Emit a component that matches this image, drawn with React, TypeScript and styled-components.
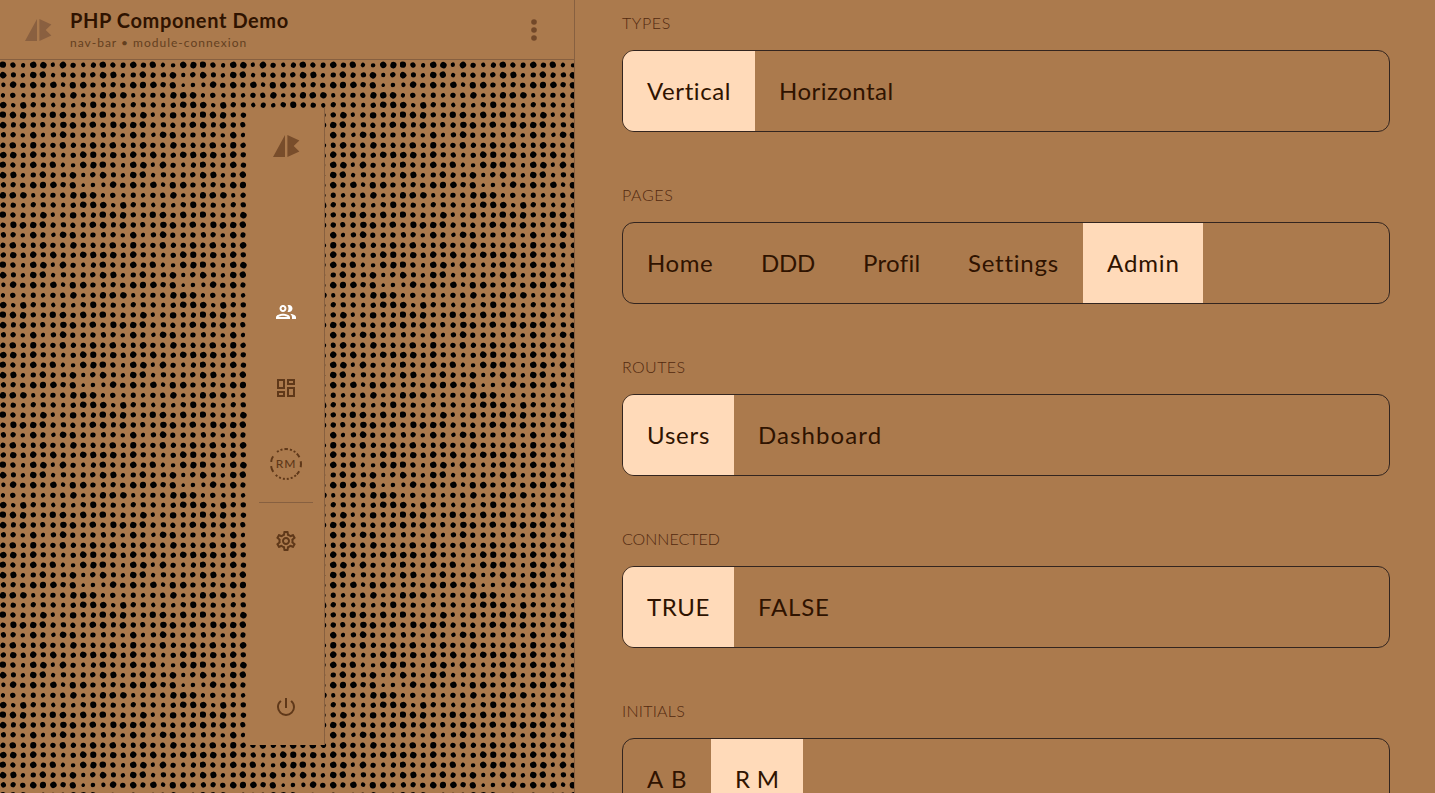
import React from 'react';
import styled, { createGlobalStyle } from 'styled-components';
import {
  MdOutlinePeople,
  MdOutlineDashboard,
  MdOutlineSettings,
  MdPowerSettingsNew,
} from 'react-icons/md';

const Global = createGlobalStyle`
  * { box-sizing: border-box; }
  body {
    margin: 0;
    overflow: hidden;
    background: #ab7a4d;
    color: #2f1300;
    font-family: Lato, "Open Sans", sans-serif;
  }
`;

const Page = styled.div`
  display: flex;
  height: 793px;
  overflow: hidden;
`;

const Preview = styled.section`
  display: flex;
  flex-direction: column;
  width: 575px;
  flex: none;
  border-right: 1px solid #876040;
`;

const Header = styled.header`
  display: flex;
  align-items: center;
  height: 60px;
  flex: none;
  padding: 0 28px 0 24px;
  border-bottom: 1px solid #876040;
`;

const Titles = styled.div`
  flex: 1;
  margin-left: 18px;
`;

const Title = styled.h1`
  margin: 0;
  font-size: 20px;
  line-height: 24px;
  font-weight: 700;
  letter-spacing: 0.6px;
  white-space: nowrap;
`;

const Subtitle = styled.p`
  margin: 3px 0 0;
  font-size: 12px;
  line-height: 16px;
  letter-spacing: 1px;
  color: #64401f;
  white-space: nowrap;
`;

const MenuButton = styled.button`
  display: grid;
  place-items: center;
  width: 24px;
  height: 24px;
  padding: 0;
  border: 0;
  background: none;
  color: #724829;
`;

const Stage = styled.div`
  display: grid;
  grid-template-columns: 247px 78px;
  flex: 1;
  padding: 48px 0;
  position: relative;
`;

const Backdrop = styled.svg`
  position: absolute;
  inset: 0;
  width: 100%;
  height: 100%;
`;

const NavBar = styled.nav`
  grid-column: 2;
  position: relative;
  display: flex;
  flex-direction: column;
  justify-content: space-between;
  background: #ab7a4d;
  box-shadow: inset -1px 0 #876040;
`;

const NavGroup = styled.div``;

const NavItem = styled.div<{ $active?: boolean }>`
  display: grid;
  place-items: center;
  height: 76px;
  color: ${(p) => (p.$active ? '#fff' : '#5f3819')};
  font-size: 24px;
`;

const Avatar = styled.span`
  display: grid;
  place-items: center;
  width: 32px;
  height: 32px;
  padding-bottom: 1px;
  border: 2px dotted #5f3819;
  border-left-style: dashed;
  border-right-style: dashed;
  border-radius: 50%;
  font-size: 12px;
  line-height: 14px;
  font-weight: 500;
  letter-spacing: 0.8px;
`;

const Divider = styled.hr`
  height: 1px;
  margin: 0 12px;
  border: 0;
  background: #876040;
`;

const Controls = styled.main`
  flex: 1;
  display: flex;
  flex-direction: column;
  gap: 52px;
  padding: 12px 45px 0 47px;
`;

const Legend = styled.h2<{ $spacing: number }>`
  margin: 0 0 14px;
  height: 24px;
  font-size: 16px;
  line-height: 21px;
  font-weight: 300;
  letter-spacing: ${(p) => p.$spacing}px;
  color: #52290f;
`;

const Options = styled.div`
  display: flex;
  height: 82px;
  border: 1px solid #33251f;
  border-radius: 12px;
  overflow: hidden;
`;

const Option = styled.button<{ $width: number; $spacing: number; $selected: boolean }>`
  width: ${(p) => p.$width}px;
  padding: 0 0 0 24px;
  border: 0;
  background: ${(p) => (p.$selected ? '#ffdab9' : 'transparent')};
  color: inherit;
  font: 24px/30px Lato, "Open Sans", sans-serif;
  letter-spacing: ${(p) => p.$spacing}px;
  text-align: left;
  white-space: nowrap;
`;

// Each digit is a dot weight from 1 (fine) to 4 (heavy).
const DOT_ROWS = [
  '43244243234334342244',
  '43244233334423433423',
  '24343424433334443412',
  '23232334234442333444',
  '42433232343323332344',
  '44433443434333423433',
  '43433344343444433334',
  '33242343333324324433',
  '34343343343433433433',
  '44343323443434343344',
];

const DOT_SIZES = [0, 1.8, 2.2, 2.6, 3.15];

const Dots = () => (
  <>
    {DOT_ROWS.flatMap((row, r) =>
      row.split('').flatMap((digit, c) => {
        const size = DOT_SIZES[Number(digit)];
        const jx = (((r * 7 + c * 11 + r * c) % 5) - 2) * 0.15;
        const jy = (((r * 3 + c * 7 + r * c) % 5) - 2) * 0.15;
        const tilt = (r * 37 + c * 53) % 180;
        return [0, 1].map((half) => {
          const x = ((c * 10 + half * 100) % 200) + 3.1 + jx;
          const y = r * 10 + half * 100 + 5 + jy;
          return (
            <ellipse
              key={`${r}-${c}-${half}`}
              cx={x}
              cy={y}
              rx={size + 0.12}
              ry={size - 0.04}
              transform={`rotate(${tilt} ${x} ${y})`}
            />
          );
        });
      }),
    )}
  </>
);

const Logo = ({ color }: { color: string }) => (
  <svg width="28" height="24" viewBox="0 0 28 24" fill={color}>
    <path d="M1 23 13 1V23ZM15.4 1 27.4 6.5 21.7 12 27.4 17.6 15.4 23Z" />
  </svg>
);

type Choice = [label: string, width: number, spacing: number];
type Group = { name: string; spacing: number; selected: number; choices: Choice[] };

const GROUPS: Group[] = [
  { name: 'TYPES', spacing: 0.6, selected: 0, choices: [['Vertical', 132, 0.6], ['Horizontal', 163, 0.5]] },
  {
    name: 'PAGES',
    spacing: 0.6,
    selected: 4,
    choices: [['Home', 114, 0.6], ['DDD', 102, -0.3], ['Profil', 105, 0.3], ['Settings', 139, 0.75], ['Admin', 120, 0.9]],
  },
  { name: 'ROUTES', spacing: 0.4, selected: 0, choices: [['Users', 111, 0.8], ['Dashboard', 172, 1.1]] },
  { name: 'CONNECTED', spacing: 0, selected: 0, choices: [['TRUE', 111, 0.6], ['FALSE', 120, 0.8]] },
  { name: 'INITIALS', spacing: 0.25, selected: 1, choices: [['A B', 88, 1.2], ['R M', 92, 0.3]] },
];

export default function App() {
  return (
    <>
      <Global />
      <Page>
        <Preview>
          <Header>
            <Logo color="#8a6040" />
            <Titles>
              <Title>PHP Component Demo</Title>
              <Subtitle>nav-bar • module-connexion</Subtitle>
            </Titles>
            <MenuButton aria-label="Menu">
              <svg width="24" height="24" viewBox="0 0 24 24" fill="currentColor">
                <circle cx="12" cy="4" r="2.8" />
                <circle cx="12" cy="12" r="2.8" />
                <circle cx="12" cy="20" r="2.8" />
              </svg>
            </MenuButton>
          </Header>
          <Stage>
            <Backdrop>
              <defs>
                <pattern id="dots" width="200" height="200" patternUnits="userSpaceOnUse">
                  <Dots />
                </pattern>
              </defs>
              <rect width="100%" height="100%" fill="url(#dots)" />
            </Backdrop>
            <NavBar>
              <NavItem>
                <Logo color="#784d2b" />
              </NavItem>
              <NavGroup>
                <NavItem $active>
                  <MdOutlinePeople />
                </NavItem>
                <NavItem>
                  <MdOutlineDashboard />
                </NavItem>
                <NavItem>
                  <Avatar>RM</Avatar>
                </NavItem>
                <Divider />
                <NavItem>
                  <MdOutlineSettings />
                </NavItem>
              </NavGroup>
              <NavItem>
                <MdPowerSettingsNew />
              </NavItem>
            </NavBar>
          </Stage>
        </Preview>
        <Controls>
          {GROUPS.map((group) => (
            <section key={group.name}>
              <Legend $spacing={group.spacing}>{group.name}</Legend>
              <Options>
                {group.choices.map(([label, width, spacing], i) => (
                  <Option key={label} $width={width} $spacing={spacing} $selected={i === group.selected}>
                    {label}
                  </Option>
                ))}
              </Options>
            </section>
          ))}
        </Controls>
      </Page>
    </>
  );
}
